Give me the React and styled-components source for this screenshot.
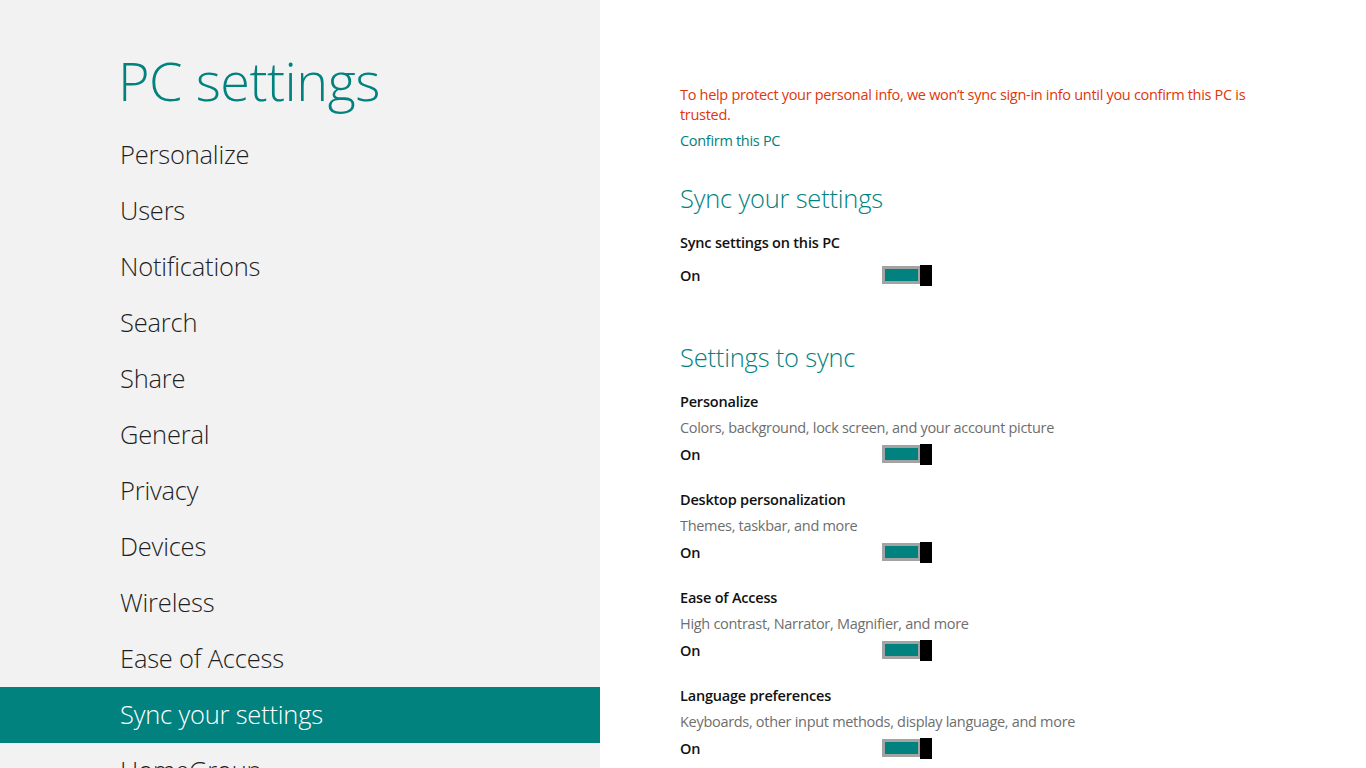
import styled, { createGlobalStyle } from "styled-components";

const GlobalStyle = createGlobalStyle`
  html, body {
    margin: 0;
    padding: 0;
    height: 100%;
    overflow: hidden;
    background: #ffffff;
  }
  body {
    font-family: "Open Sans", "Noto Sans", sans-serif;
  }
`;

const TEAL = "#01827f";

const Page = styled.div`
  display: flex;
  width: 1366px;
  height: 768px;
  overflow: hidden;
`;

const Sidebar = styled.aside`
  width: 600px;
  flex-shrink: 0;
  background: #f2f2f2;
  display: flex;
  flex-direction: column;
`;

const Title = styled.h1`
  margin: 0;
  padding: 44px 0 0 118px;
  height: 127px;
  flex-shrink: 0;
  box-sizing: border-box;
  font-size: 54px;
  line-height: 72px;
  font-weight: 300;
  color: ${TEAL};
  letter-spacing: -0.5px;
`;

const NavItem = styled.div`
  height: 56px;
  flex-shrink: 0;
  line-height: 54px;
  padding-left: 120px;
  font-size: 25.5px;
  font-weight: 300;
  color: ${(p) => (p.$active ? "#ffffff" : "#1f1f1f")};
  background: ${(p) => (p.$active ? TEAL : "transparent")};
  letter-spacing: -0.2px;
`;

const Content = styled.main`
  flex: 1;
  padding: 85px 0 0 80px;
  background: #ffffff;
`;

const Warning = styled.p`
  margin: 0;
  width: 600px;
  font-size: 14.5px;
  line-height: 20px;
  letter-spacing: -0.3px;
  color: #e0360a;
`;

const Link = styled.a`
  display: block;
  margin-top: 6px;
  font-size: 14.5px;
  line-height: 20px;
  letter-spacing: -0.3px;
  color: ${TEAL};
  text-decoration: none;
`;

const SectionHeading = styled.h2`
  margin: ${(p) => p.$top}px 0 17px;
  font-size: 25.5px;
  line-height: 36px;
  font-weight: 300;
  color: ${TEAL};
  letter-spacing: -0.2px;
`;

const Group = styled.div`
  display: flex;
  flex-direction: column;
  & + & {
    margin-top: 24px;
  }
`;

const Label = styled.div`
  font-size: 14.5px;
  line-height: 20px;
  font-weight: 600;
  letter-spacing: -0.2px;
  color: #111111;
  margin-bottom: 6px;
`;

const Desc = styled.div`
  font-size: 14.5px;
  line-height: 20px;
  letter-spacing: -0.3px;
  color: #6e6e6e;
`;

const Row = styled.div`
  display: flex;
  align-items: center;
  height: 24px;
  margin-top: 4px;
`;

const State = styled.span`
  width: 202px;
  font-size: 14.5px;
  font-weight: 600;
  letter-spacing: -0.2px;
  color: #111111;
`;

const Toggle = styled.div`
  position: relative;
  width: 39px;
  height: 18px;
  box-sizing: border-box;
  border: 3px solid #a3a3a3;
  background: ${TEAL};
`;

const Thumb = styled.span`
  position: absolute;
  right: -14px;
  top: -4px;
  width: 12px;
  height: 21px;
  background: #000000;
`;

const navItems = [
  "Personalize",
  "Users",
  "Notifications",
  "Search",
  "Share",
  "General",
  "Privacy",
  "Devices",
  "Wireless",
  "Ease of Access",
  "Sync your settings",
  "HomeGroup",
];

const syncItems = [
  ["Personalize", "Colors, background, lock screen, and your account picture"],
  ["Desktop personalization", "Themes, taskbar, and more"],
  ["Ease of Access", "High contrast, Narrator, Magnifier, and more"],
  ["Language preferences", "Keyboards, other input methods, display language, and more"],
];

function Switch() {
  return (
    <Row>
      <State>On</State>
      <Toggle>
        <Thumb />
      </Toggle>
    </Row>
  );
}

export default function App() {
  return (
    <>
      <GlobalStyle />
      <Page>
        <Sidebar>
          <Title>PC settings</Title>
          {navItems.map((item) => (
            <NavItem key={item} $active={item === "Sync your settings"}>
              {item}
            </NavItem>
          ))}
        </Sidebar>
        <Content>
          <Warning>
            To help protect your personal info, we won’t sync sign-in info until you confirm this PC is trusted.
          </Warning>
          <Link>Confirm this PC</Link>
          <SectionHeading $top={29}>Sync your settings</SectionHeading>
          <Group>
            <Label>Sync settings on this PC</Label>
            <Switch />
          </Group>
          <SectionHeading $top={52}>Settings to sync</SectionHeading>
          {syncItems.map(([label, desc]) => (
            <Group key={label}>
              <Label>{label}</Label>
              <Desc>{desc}</Desc>
              <Switch />
            </Group>
          ))}
        </Content>
      </Page>
    </>
  );
}
